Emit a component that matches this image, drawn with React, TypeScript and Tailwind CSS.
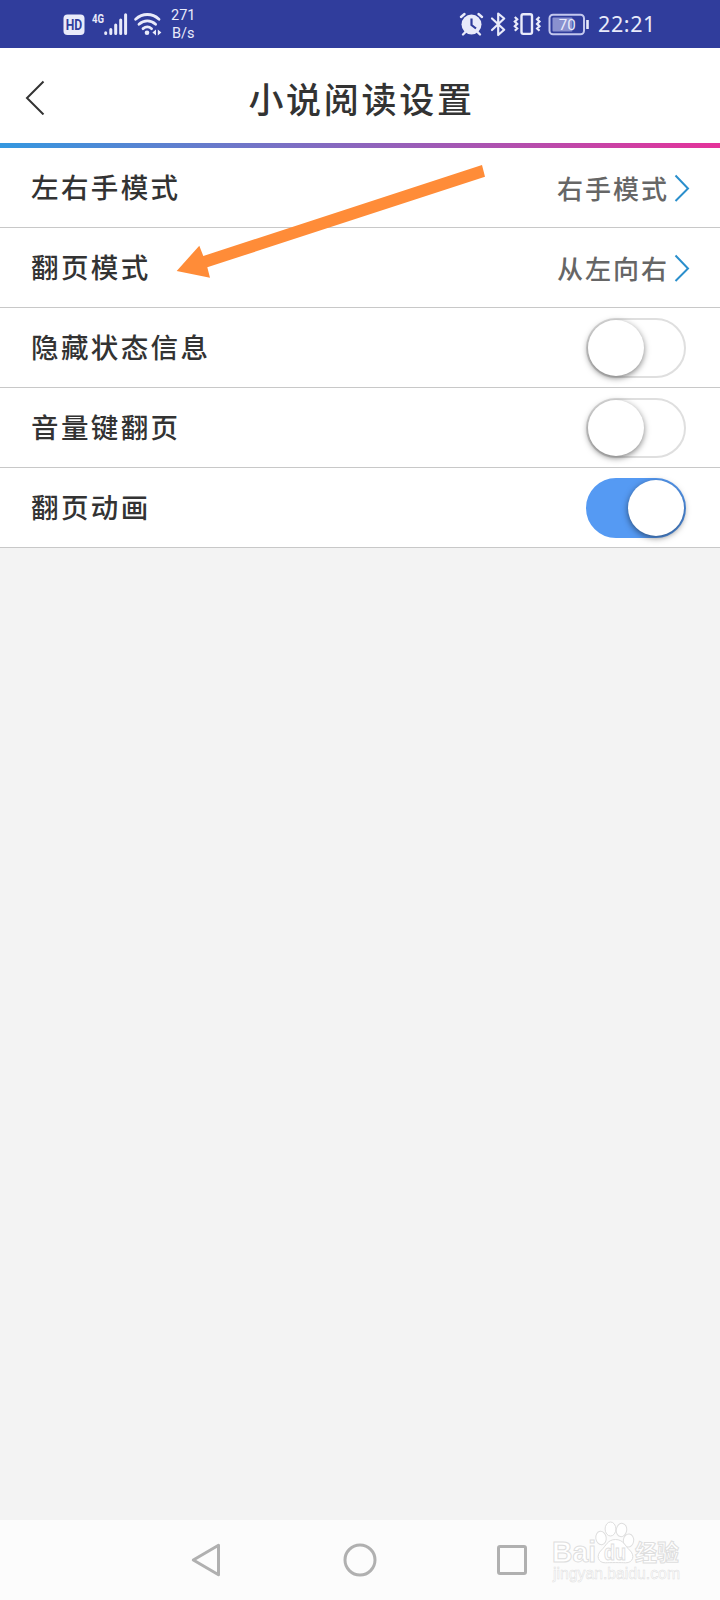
import { useState } from "react";
import clsx from "clsx";

const links = [
  { label: "左右手模式", value: "右手模式" },
  { label: "翻页模式", value: "从左向右" },
];

const switches = [
  { label: "隐藏状态信息", on: false },
  { label: "音量键翻页", on: false },
  { label: "翻页动画", on: true },
];

function StatusBar() {
  return (
    <div className="flex h-12 items-center bg-[#303d9c] pl-[63px] pr-[64px] font-['Roboto',sans-serif] text-[#e9ebfa]">
      {/* HD + 4G signal + wifi */}
      <svg width="100" height="48" viewBox="63 0 100 48" className="shrink-0">
        <rect x="63.5" y="14.5" width="21" height="20.5" rx="4" fill="#e9ebfa" />
        <text x="74" y="29.8" textAnchor="middle" fontSize="14" fontWeight="700" fill="#303d9c" textLength="16.5" lengthAdjust="spacingAndGlyphs">
          HD
        </text>
        <text x="92" y="23" fontSize="13" fontWeight="700" fill="#e9ebfa" textLength="12" lengthAdjust="spacingAndGlyphs">
          4G
        </text>
        <g stroke="#e9ebfa" strokeWidth="3" strokeLinecap="round">
          <path d="M105.7 32.7v.8M110.8 29.5v4M115.7 25v8.5M120.7 20v13.5M125.6 14.8v18.7" />
        </g>
        <g fill="none" stroke="#e9ebfa" strokeWidth="2.8" strokeLinecap="round">
          <path d="M135.6 19.2c7-6.3 16.5-6.3 23.4 0" />
          <path d="M139 24.2c5-4.5 11.6-4.5 16.6 0" />
          <path d="M143 28.7c2.7-2.2 6-2.2 8.6 0" />
        </g>
        <circle cx="147" cy="32.8" r="2.3" fill="#e9ebfa" />
        <path d="M156 29.5v6l-3.6-3zM157.8 29.5v6l3.6-3z" fill="#e9ebfa" />
      </svg>
      <div className="ml-2 w-8 pt-px text-[14.5px] leading-[18px]">
        <div>271</div>
        <div className="pl-px">B/s</div>
      </div>

      {/* alarm, bluetooth, vibrate, battery */}
      <svg width="134" height="48" viewBox="458 0 134 48" className="ml-auto shrink-0">
        <circle cx="471.5" cy="24.5" r="10" fill="#e9ebfa" />
        <path d="M461 17l3.5-3M482 17l-3.5-3M465.5 32l-2.5 2.5M477.5 32l2.5 2.5" stroke="#e9ebfa" strokeWidth="2.4" strokeLinecap="round" />
        <path d="M471.5 18.5V25l4.5 3.5" fill="none" stroke="#303d9c" strokeWidth="2.2" />
        <path d="M492 18.5l12.2 11.2-6 5.3V13.5l6 5L492 30" fill="none" stroke="#e9ebfa" strokeWidth="2.2" strokeLinejoin="round" strokeLinecap="round" />
        <rect x="521.5" y="14.3" width="10.5" height="19.6" rx="1.8" fill="none" stroke="#e9ebfa" strokeWidth="2.4" />
        <path
          d="M514.8 17l2.4 2.3-2.4 2.3 2.4 2.3-2.4 2.3 2.4 2.3-2.4 2.3M539.5 17l-2.4 2.3 2.4 2.3-2.4 2.3 2.4 2.3-2.4 2.3 2.4 2.3"
          fill="none"
          stroke="#e9ebfa"
          strokeWidth="2.2"
        />
        <rect x="549.5" y="14.8" width="34.5" height="19.4" rx="3.5" fill="none" stroke="#c3c8ee" strokeWidth="2" />
        <rect x="552.5" y="17.5" width="20" height="14" rx="1" fill="#8a91cf" />
        <path d="M587.5 20v9" stroke="#e9ebfa" strokeWidth="2.6" />
        <text x="567.3" y="30" textAnchor="middle" fontSize="15.5" fill="#e9ebfa" textLength="17" lengthAdjust="spacingAndGlyphs">
          70
        </text>
      </svg>
      <div className="ml-[6px] w-[58px] whitespace-nowrap font-['Noto_Sans',sans-serif] text-[21.5px] tracking-[0.6px]">22:21</div>
    </div>
  );
}

function Switch({ on, onClick }: { on: boolean; onClick: () => void }) {
  return (
    <button
      onClick={onClick}
      className={clsx(
        "flex h-[60px] w-[100px] items-center rounded-full border-2",
        on ? "justify-end border-[#559af3] bg-[#559af3]" : "justify-start border-[#dfdfdf] bg-white"
      )}
    >
      <span className="size-14 rounded-full bg-white shadow-[0_2px_6px_rgba(0,0,0,0.5)]" />
    </button>
  );
}

function NavBar() {
  return (
    <div className="relative grid h-20 grid-cols-[154px_154px_154px] place-items-center bg-[#fcfcfc] pl-[129px]">
      <svg width="40" height="40" fill="none" stroke="#b0b0b0" strokeWidth="3" strokeLinejoin="round">
        <path d="M7.3 20L32.5 5.2v29.6z" />
      </svg>
      <svg width="40" height="40" fill="none" stroke="#b0b0b0" strokeWidth="3">
        <circle cx="20" cy="20" r="15" />
      </svg>
      <svg width="40" height="40" fill="none" stroke="#b0b0b0" strokeWidth="3">
        <rect x="4.5" y="6.5" width="27" height="27" rx="1.5" />
      </svg>

      {/* Watermark */}
      <svg width="140" height="64" viewBox="548 1520 140 64" className="absolute left-[548px] top-0" fill="#fff" stroke="#dedede" strokeWidth="1">
        <g fontFamily="Liberation Sans, Noto Sans CJK SC, sans-serif" fontWeight="700">
          <text x="552" y="1562" fontSize="29" textLength="44" lengthAdjust="spacingAndGlyphs">
            Bai
          </text>
          <ellipse cx="601" cy="1538" rx="5.2" ry="6.7" transform="rotate(-8 601 1538)" />
          <ellipse cx="610.5" cy="1529" rx="5.4" ry="7" />
          <ellipse cx="621.5" cy="1530" rx="5.2" ry="6.7" transform="rotate(10 621.5 1530)" />
          <ellipse cx="628.5" cy="1540.5" rx="5.2" ry="6.5" transform="rotate(8 628.5 1540.5)" />
          <path d="M615.5 1539.5c-8 0-9.500 6.500-14 10.500-6 5.500-3.500 13 4 12.800 4-.3 16-.3 20 0 7.500.2 10-7.300 4-12.800-4.500-4-6-10.500-14-10.500z" />
          <text x="604" y="1560" fontSize="22" textLength="22" lengthAdjust="spacingAndGlyphs">
            du
          </text>
          <text x="635" y="1560.5" fontSize="22.5" textLength="44" lengthAdjust="spacingAndGlyphs">
            经验
          </text>
        </g>
        <text x="553" y="1579" fontSize="16" strokeWidth="0.5" fontFamily="Liberation Sans, sans-serif" textLength="127" lengthAdjust="spacingAndGlyphs">
          jingyan.baidu.com
        </text>
      </svg>
    </div>
  );
}

export default function App() {
  const [states, setStates] = useState(switches.map((s) => s.on));

  const toggle = (index: number) => {
    setStates(states.map((s, i) => (i === index ? !s : s)));
  };

  return (
    <div className="relative flex h-[1600px] w-[720px] flex-col overflow-hidden bg-[#f3f3f3] font-['Noto_Sans_CJK_SC',sans-serif] text-[#333]">
      <StatusBar />

      <header className="grid h-[95px] grid-cols-[120px_1fr_120px] items-center bg-white">
        <svg width="24" height="38" className="ml-6" fill="none" stroke="#333" strokeWidth="2">
          <path d="M19.5 4.5L3 21l16.5 16.5" />
        </svg>
        <h1 className="pb-px pl-[3px] pt-1 text-center text-[35px] font-medium leading-none tracking-[2.7px]">小说阅读设置</h1>
      </header>
      <div className="h-[5px] shrink-0 bg-[linear-gradient(90deg,#3498e0,#e5329a)]" />

      <main className="flex-1">
        {links.map((row) => (
          <div key={row.label} className="flex h-20 items-center border-b border-[#c8c8c8] bg-white pl-[31px] pr-[30px]">
            <span className="pb-0.5 text-[27.5px] font-medium leading-none tracking-[2.4px]">{row.label}</span>
            <span className="ml-auto text-[26px] font-medium leading-none tracking-[2px] text-[#666]">{row.value}</span>
            <svg width="16" height="28" className="ml-[5px]" fill="none" stroke="#2b8fcc" strokeWidth="2">
              <path d="M1.5 1.5L14 14.5 1.5 27" />
            </svg>
          </div>
        ))}
        {switches.map((row, index) => (
          <div key={row.label} className="flex h-20 items-center justify-between border-b border-[#c8c8c8] bg-white pl-[31px] pr-[34px]">
            <span className="pb-0.5 text-[27.5px] font-medium leading-none tracking-[2.4px]">{row.label}</span>
            <Switch on={states[index]} onClick={() => toggle(index)} />
          </div>
        ))}
      </main>

      <NavBar />

      {/* Pointer to the page turning mode */}
      <svg width="320" height="120" viewBox="170 160 320 120" className="pointer-events-none absolute left-[170px] top-[160px]">
        <path d="M176.700 271l22.600-25.300 4 10.300L482 165l3 11.700-277.700 90.600 2.700 10.400z" fill="#ff8c38" />
      </svg>
    </div>
  );
}
